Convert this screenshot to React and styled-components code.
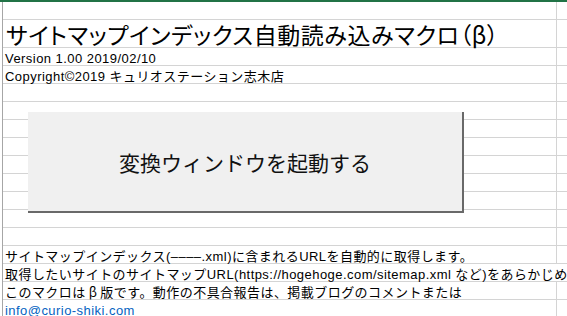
import React from "react";
import styled, { createGlobalStyle } from "styled-components";

const GlobalStyle = createGlobalStyle`
  html, body {
    margin: 0;
    padding: 0;
    background: #ffffff;
    overflow: hidden;
  }
`;

const Sheet = styled.div`
  position: relative;
  width: 567px;
  height: 316px;
  overflow: hidden;
  border-top: 2px solid #217346;
  box-sizing: border-box;
  font-family: "Liberation Sans", "Noto Sans CJK JP", sans-serif;
  color: #000;
`;

const Grid = styled.div`
  display: flex;
  flex-direction: column;
  margin-left: 2px;
  border-left: 1px solid #a6a6a6;
`;

const Row = styled.div`
  display: grid;
  grid-template-columns: 554px 1fr;
  height: ${(p) => p.h || 17}px;
  flex-shrink: 0;
  border-bottom: 1px solid #d4d4d4;
`;

const Cell = styled.div`
  position: relative;
  display: flex;
  align-items: flex-end;
  padding: 0 0 ${(p) => p.pb || 0}px 2px;
  white-space: nowrap;
  border-right: 1px solid ${(p) => (p.spill ? "transparent" : "#d4d4d4")};
  z-index: 1;
`;

const Title = styled.span`
  font-family: "Noto Sans CJK JP", sans-serif;
  font-size: 23px;
  line-height: 23px;
  font-feature-settings: "palt";
  letter-spacing: 0.6px;
  margin-left: 1px;
`;

const Small = styled.span`
  font-size: 13px;
  line-height: 13px;
  letter-spacing: 0.45px;
`;

const Wide = styled.span`
  font-family: "Noto Sans CJK JP", sans-serif;
  margin: 0 3px;
`;

const Link = styled(Small)`
  color: #0563c1;
`;

const MacroButton = styled.div`
  position: absolute;
  left: 28px;
  top: 110px;
  width: 434px;
  height: 99px;
  background: #f0f0f0;
  border-right: 2px solid #696969;
  border-bottom: 2px solid #696969;
  display: flex;
  align-items: center;
  justify-content: center;
  font-family: "Noto Sans CJK JP", sans-serif;
  font-size: 21px;
  color: #111;
  z-index: 2;
`;

const emptyRows = 9;

const App = () => {
  return (
    <>
      <GlobalStyle />
      <Sheet>
        <Grid>
          <Row>
            <Cell />
            <div />
          </Row>
          <Row h={27}>
            <Cell pb={1}>
              <Title>サイトマップインデックス自動読み込みマクロ（β）</Title>
            </Cell>
            <div />
          </Row>
          <Row>
            <Cell>
              <Small>Version 1.00 2019/02/10</Small>
            </Cell>
            <div />
          </Row>
          <Row>
            <Cell>
              <Small>Copyright©2019 キュリオステーション志木店</Small>
            </Cell>
            <div />
          </Row>
          {Array.from({ length: emptyRows }).map((_, i) => (
            <Row key={i}>
              <Cell />
              <div />
            </Row>
          ))}
          <Row>
            <Cell>
              <Small>
                サイトマップインデックス(––––.xml)に含まれるURLを自動的に取得します。
              </Small>
            </Cell>
            <div />
          </Row>
          <Row>
            <Cell spill>
              <Small>
                取得したいサイトのサイトマップURL(https://hogehoge.com/sitemap.xml
                など)をあらかじめ
              </Small>
            </Cell>
            <div />
          </Row>
          <Row>
            <Cell>
              <Small>
                このマクロは<Wide>β</Wide>版です。動作の不具合報告は、掲載ブログのコメントまたは
              </Small>
            </Cell>
            <div />
          </Row>
          <Row>
            <Cell>
              <Link>info@curio-shiki.com</Link>
            </Cell>
            <div />
          </Row>
        </Grid>
        <MacroButton>変換ウィンドウを起動する</MacroButton>
      </Sheet>
    </>
  );
};

export default App;
